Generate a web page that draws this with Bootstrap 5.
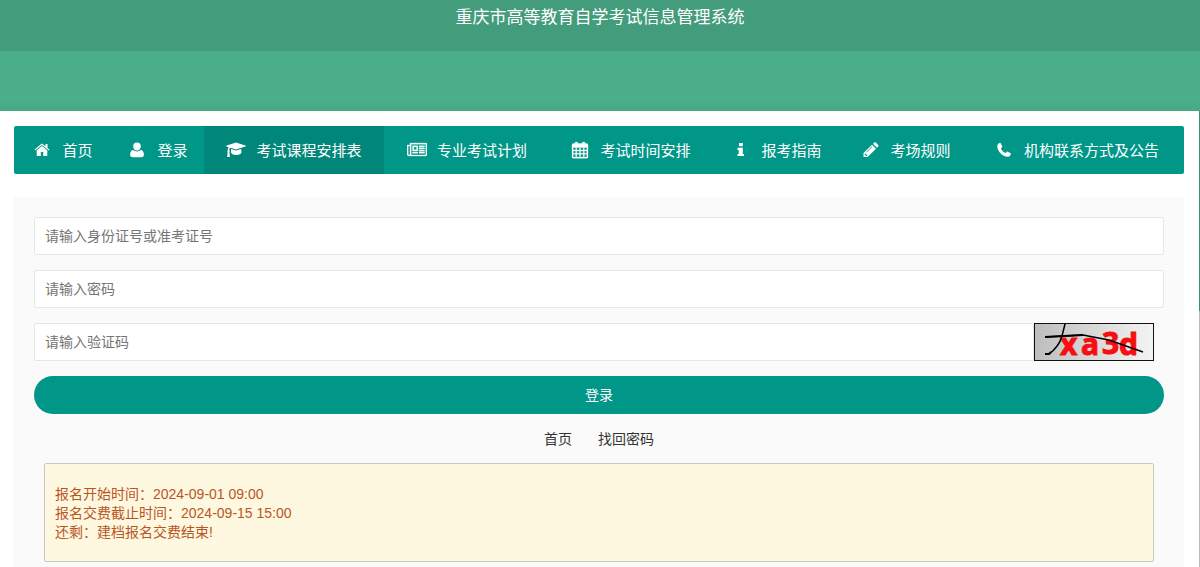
<!DOCTYPE html>
<html lang="zh-CN">
<head>
<meta charset="utf-8">
<meta name="viewport" content="width=device-width, initial-scale=1">
<title>重庆市高等教育自学考试信息管理系统</title>
<link rel="stylesheet" href="https://cdn.jsdelivr.net/npm/bootstrap@5.3.0/dist/css/bootstrap.min.css">
<style>
body { font-family: "Liberation Sans", "Noto Sans CJK SC", sans-serif; font-size: 14px; line-height: 19px; color: #333; }
.site-head { background: #4aaf8a linear-gradient(to top, #47a885, #4aaf8a 12px); padding-bottom: 60px; }
.site-title { background: #439c7b; color: #fff; font-size: 17px; line-height: 35px; padding-bottom: 16px; }
.page-body { border-right: 1px solid #bbb; border-image: linear-gradient(#3a9271 200px, #bbb 200px) 1; border-width: 0 1px 0 0; padding: 15px 15px 0 14px; }
.main-menu { display: grid; grid-template-columns: 97fr 93fr 180fr 166fr 161fr 131fr 127fr 215fr; background: #009688; border-radius: 2px; overflow: hidden; }
.main-menu .nav-link { color: #fff; font-size: 15px; line-height: 48px; gap: 10px; padding: 0; white-space: nowrap; }
.main-menu .nav-link.active { background: #008779; }
.main-menu span { line-height: 46px; padding-top: 2px; }
.main-menu svg { width: 20px; height: 18px; fill: currentColor; flex: none; }
.login-panel { background: #fafafa; margin-top: 23px; padding: 20px 20px 5px; }
.login-panel .form-control { height: 38px; border: 1px solid #e6e6e6; border-radius: 2px; padding: 0 10px; font-size: 14px; }
.login-panel .form-control::placeholder { color: #757575; opacity: 1; }
.stack { gap: 15px; }
.captcha-row { padding-right: 10px; }
.captcha { width: 120px; height: 38px; flex: none; overflow: visible; }
.captcha text { font: bold 30px "Noto Sans", "DejaVu Sans", sans-serif; fill: #f70d12; stroke: #f70d12; }
.btn-login { height: 38px; background: #009688; color: #fff; font-size: 14px; padding: 0; }
.btn-login:hover { background: #33ab9f; color: #fff; }
.links { gap: 26px; margin: 15px 0 14px; line-height: 20px; }
.links a { color: #333; }
.notice { background: #fff8e1; border: 1px solid #c9c9c9; border-radius: 2px; color: #b8561f; margin: 0 10px; padding: 21px 10px 19px; }
</style>
</head>
<body class="bg-white">
<div class="d-flex flex-column min-vh-100">
<header class="site-head">
  <h1 class="site-title text-center fw-normal m-0">重庆市高等教育自学考试信息管理系统</h1>
</header>
<main class="page-body flex-grow-1">
  <nav class="main-menu" aria-label="主导航">
    <a class="nav-link d-flex align-items-center justify-content-center" href="#"><svg viewBox="0 0 20 18"><path d="M10 5.1 4.700 9.500v5c0 .3.2.5.5.5h3.600v-3.900h2.400V15h3.600c.3 0 .5-.2.5-.5v-5zM17.600 8.700 15.500 6.900V3h-2v2.200l-2.400-2c-.6-.5-1.600-.5-2.200 0L2.400 8.700l.8.9L10 4l6.800 5.600z"/></svg><span>首页</span></a>
    <a class="nav-link d-flex align-items-center justify-content-center" href="#"><svg viewBox="0 0 20 18"><path d="M10 1.500a3.800 3.800 0 0 1 3.800 3.900c0 2.300-1.700 4.100-3.800 4.100S6.200 7.700 6.200 5.400A3.800 3.800 0 0 1 10 1.500zM6 9.100c2.300 1.900 5.700 1.900 8 0 2 .3 2.900 2.500 2.900 4.700 0 1.500-1 2.500-2.400 2.500h-9c-1.400 0-2.400-1-2.400-2.500C3.100 11.600 4 9.400 6 9.100z"/></svg><span>登录</span></a>
    <a class="nav-link active d-flex align-items-center justify-content-center" aria-current="page" href="#"><svg viewBox="0 0 20 18"><path d="M10 1.500 20 4.700c.3.1.3.500 0 .6L10 8.500 4.200 6.700c-.8.600-.9 1.600-.9 2.400.6.400.7 1.200.1 1.700l.5 5.100H1.200l.5-5.100c-.6-.5-.5-1.300.1-1.700 0-1.100.2-2.100.8-2.900L0 5.300c-.3-.1-.3-.5 0-.6zM5 8l5 1.600L15.200 8l.3 3.200C15.500 12.800 13 14 10.200 14S5 12.800 5 11.200z"/></svg><span>考试课程安排表</span></a>
    <a class="nav-link d-flex align-items-center justify-content-center" href="#"><svg viewBox="0 0 20 18"><path fill-rule="evenodd" d="M3 2h16c.6 0 1 .4 1 1v10.500c0 1-.7 1.500-1.500 1.500H2C.8 15 0 14.200 0 13V4h3zM1.200 5v8c0 1.200 1.800 1.200 1.800 0V5zm3-1.800v10c0 .300 0 .6-.2.800h14.300c.3 0 .5-.2.500-.5V3.200zM5.500 4.700h5.300V10H5.500zm1.300 1.300v2.700h2.700V6zM5.500 11h5.300v1.300H5.500zM12 4.700h5.500V6H12zm0 2.100h5.500v1.300H12zm0 2.100h5.500v1.300H12zm0 2.100h5.500v1.300H12z" stroke="currentColor" stroke-width=".3"/></svg><span>专业考试计划</span></a>
    <a class="nav-link d-flex align-items-center justify-content-center" href="#"><svg viewBox="0 0 20 18"><path fill-rule="evenodd" d="M3.500 2.500h1.200C4.700.4 8 .4 8 2.500h4c0-2.100 3.300-2.100 3.300 0h1.200c.8 0 1.500.6 1.500 1.400v12c0 .8-.7 1.400-1.500 1.400h-13C2.700 17.300 2 16.700 2 15.900v-12c0-.8.7-1.400 1.500-1.400zM3.200 6.600V9h2.500V6.600zm3.500 0V9H9.500V6.600zm3.800 0V9h2.800V6.600zm3.800 0V9h2.500V6.600zM3.200 9.900v2.400h2.500V9.900zm3.500 0v2.400h2.800V9.900zm3.800 0v2.400h2.800V9.900zm3.800 0v2.400h2.500V9.900zM3.200 13.200v2.900h2.500v-2.900zm3.500 0v2.900h2.800v-2.900zm3.800 0v2.900h2.800v-2.900zm3.800 0v2.900h2.500v-2.900z" stroke="currentColor" stroke-width=".3"/></svg><span>考试时间安排</span></a>
    <a class="nav-link d-flex align-items-center justify-content-center" href="#"><svg viewBox="0 0 20 18"><path d="M8 2h3.800v3.200H8zM6.500 6.800h5.300V13H13v2H6.500v-2h1.200V9H6.500z"/></svg><span>报考指南</span></a>
    <a class="nav-link d-flex align-items-center justify-content-center" href="#"><svg viewBox="0 0 20 18"><path fill-rule="evenodd" d="m12 3.800 4 4-8.300 8.300H3.500v-4zM13 2.800l1.100-1c.6-.6 1.300-.6 1.900 0l2 2c.6.6.6 1.300 0 1.900L17 6.800zM4.700 13.100v1h1.100v1h1l.7-.7-2.100-2zM6.300 11l.4.400 5.500-5.500-.4-.4z"/></svg><span>考场规则</span></a>
    <a class="nav-link d-flex align-items-center justify-content-center" href="#"><svg viewBox="0 0 20 18"><path d="M5.500 2.100c.6-.3 1-.2 1.300.3l1.400 2.700c.3.500.1.900-.3 1.300l-1 1c.9 2.100 2.500 3.700 4.600 4.600l1.100-1.100c.3-.3.700-.4 1.100-.2l2.700 1.400c.5.200.5.600.3 1.300-.5 1.700-1.700 2.400-3.200 2.400C8.500 15.600 3.300 10.300 3.300 5.500c0-1.700.7-2.900 2.200-3.400z"/></svg><span>机构联系方式及公告</span></a>
  </nav>
  <section class="login-panel">
    <form class="d-flex flex-column stack">
      <input class="form-control" type="text" placeholder="请输入身份证号或准考证号" aria-label="身份证号或准考证号">
      <input class="form-control" type="password" placeholder="请输入密码" aria-label="密码">
      <div class="captcha-row d-flex">
        <input class="form-control" type="text" placeholder="请输入验证码" aria-label="验证码">
        <svg class="captcha" viewBox="0 0 120 38" role="img" aria-label="验证码图片">
          <defs><linearGradient id="shade"><stop offset="0" stop-color="#bdbdbd"/><stop offset="1" stop-color="#f4f4f4"/></linearGradient></defs>
          <rect x=".5" y=".5" width="119" height="37" fill="url(#shade)" stroke="#111"/>
          <text x="26 47 68 85" y="32 32 31 32">xa3d</text>
          <path d="M11 14 49 12 75 17 109 29" fill="none" stroke="#000" stroke-width="1.500"/>
          <path d="M11 14 49 12M11 31h4l2-2" fill="none" stroke="#000" stroke-width="2"/>
          <path d="M15 31c7-5 11-11 13-18l3-12" fill="none" stroke="#000" stroke-width="1.500"/>
        </svg>
      </div>
      <button class="btn btn-login rounded-pill border-0 w-100" type="button">登录</button>
    </form>
    <div class="links d-flex justify-content-center">
      <a class="text-decoration-none" href="#">首页</a>
      <a class="text-decoration-none" href="#">找回密码</a>
    </div>
    <div class="notice">
      <div>报名开始时间：2024-09-01 09:00</div>
      <div>报名交费截止时间：2024-09-15 15:00</div>
      <div>还剩：建档报名交费结束!</div>
    </div>
  </section>
</main>
</div>
<script src="https://cdn.jsdelivr.net/npm/bootstrap@5.3.0/dist/js/bootstrap.bundle.min.js"></script>
</body>
</html>
